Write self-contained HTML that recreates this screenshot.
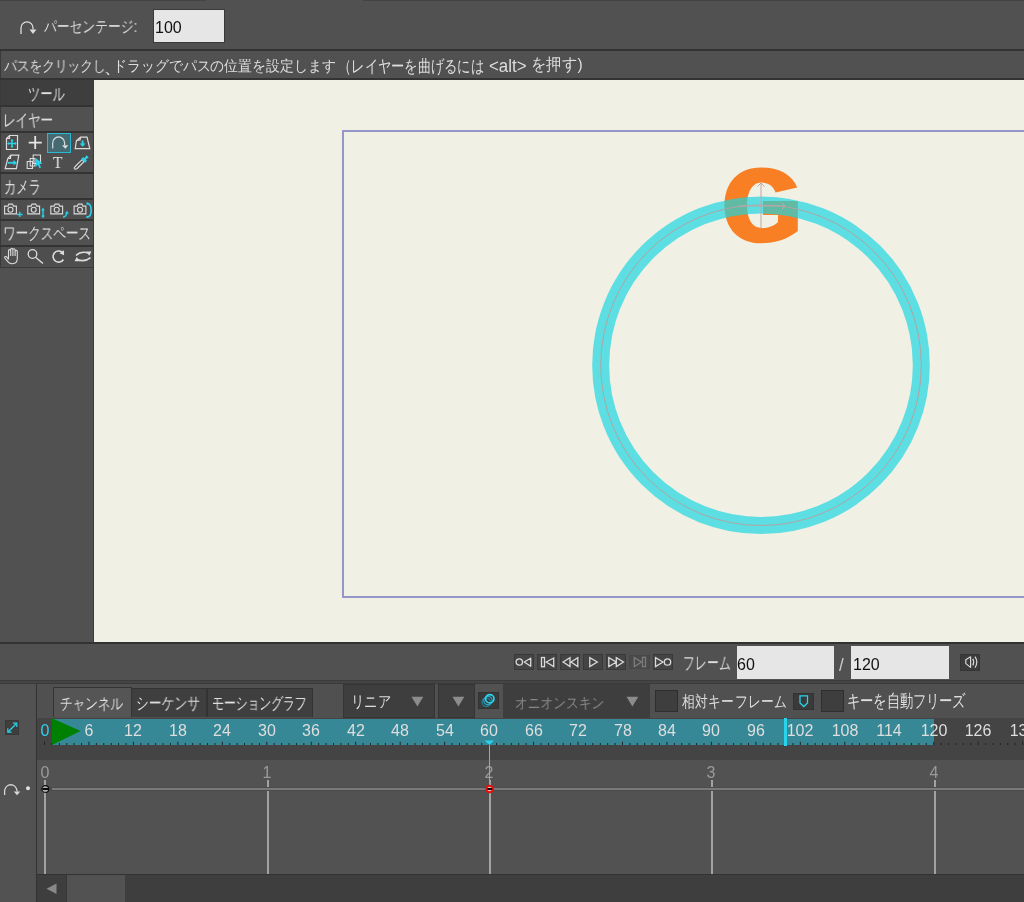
<!DOCTYPE html>
<html><head><meta charset="utf-8">
<style>
*{margin:0;padding:0;box-sizing:border-box}
html,body{width:1024px;height:902px;overflow:hidden;background:#515151;font-family:"Liberation Sans",sans-serif;color:#dedede;font-size:13px}
.a{position:absolute}
.t{position:absolute;white-space:nowrap;line-height:16px;transform-origin:0 0;will-change:transform}
svg{overflow:visible}
</style></head><body>
<div class="a" style="left:0px;top:0px;width:206px;height:1px;background:#444;"></div>
<div class="a" style="left:363px;top:0px;width:661px;height:1px;background:#444;"></div>
<svg class="a" style="left:18px;top:18px;" width="20" height="17" viewBox="0 0 20 17"><path d="M3 16 V10 A6 6.2 0 0 1 15 10 V11.5" fill="none" stroke="#dcdcdc" stroke-width="1.3"/><path d="M11.5 11.5 L18.5 11.5 L15 16 Z" fill="#dcdcdc"/></svg>
<div class="t" style="left:44.4px;top:17.3px;color:#dedede;font-size:13px;transform:matrix(0.985,0,0,1.245,0,0)">パーセンテージ:</div>
<div class="a" style="left:153px;top:9px;width:72px;height:34px;background:#e6e6e6;border:1px solid #3a3a3a"></div>
<div class="t" style="left:155px;top:17px;font-size:16px;color:#111;line-height:20px;transform:scaleY(1.06);transform-origin:0 0">100</div>
<div class="a" style="left:0px;top:49px;width:1024px;height:2px;background:#333;"></div>
<div class="a" style="left:0px;top:51px;width:1px;height:28px;background:#3a3a3a;"></div>
<div class="t" style="left:4.0px;top:57.0px;color:#dedede;font-size:13px;transform:matrix(0.975,0,0,1.125,0,0)">パスをクリックし</div>
<div class="t" style="left:103px;top:56.5px;color:#dedede;font-size:13px;transform:matrix(1.6,0,0,1.3,0,0)">、</div>
<div class="t" style="left:112.6px;top:56.7px;color:#dedede;font-size:13px;transform:matrix(1.071,0,0,1.162,0,0)">ドラッグでパスの位置を設定します</div>
<div class="t" style="left:337.8px;top:55.7px;color:#dedede;font-size:13px;transform:matrix(1.02,0,0,1.308,0,0)">（レイヤーを曲げるには</div>
<div class="t" style="left:488.6px;top:57.9px;color:#dedede;font-size:16px;transform:matrix(1.056,0,0,1.108,0,0)">&lt;alt&gt;</div>
<div class="t" style="left:530.6px;top:54.3px;color:#dedede;font-size:13px;transform:matrix(1.19,0,0,1.331,0,0)">を押す)</div>
<div class="a" style="left:0px;top:78px;width:1024px;height:2px;background:#333;"></div>
<div class="a" style="left:0px;top:80px;width:94px;height:563px;background:#515151;"></div>
<div class="a" style="left:0px;top:80px;width:1px;height:188px;background:#3a3a3a;"></div>
<div class="a" style="left:1px;top:80px;width:92px;height:25px;background:#3e3e3e;"></div>
<div class="t" style="left:28.4px;top:82.5px;color:#dedede;font-size:13px;transform:matrix(0.95,0,0,1.42,0,0)">ツール</div>
<div class="a" style="left:0px;top:105px;width:93px;height:2px;background:#333;"></div>
<div class="t" style="left:3.0px;top:110.5px;color:#dedede;font-size:13px;transform:matrix(0.957,0,0,1.275,0,0)">レイヤー</div>
<div class="a" style="left:0px;top:131px;width:93px;height:2px;background:#333;"></div>
<div class="a" style="left:1px;top:133px;width:92px;height:39px;background:#4e4e4e;"></div>
<div class="a" style="left:0px;top:172px;width:93px;height:2px;background:#333;"></div>
<div class="t" style="left:3.5px;top:175.8px;color:#dedede;font-size:13px;transform:matrix(0.95,0,0,1.4,0,0)">カメラ</div>
<div class="a" style="left:0px;top:198px;width:93px;height:2px;background:#333;"></div>
<div class="a" style="left:1px;top:200px;width:92px;height:19px;background:#4e4e4e;"></div>
<div class="a" style="left:0px;top:219px;width:93px;height:2px;background:#333;"></div>
<div class="t" style="left:3.1px;top:223.7px;color:#dedede;font-size:13px;transform:matrix(0.966,0,0,1.291,0,0)">ワークスペース</div>
<div class="a" style="left:0px;top:245px;width:93px;height:2px;background:#333;"></div>
<div class="a" style="left:1px;top:247px;width:92px;height:20px;background:#4e4e4e;"></div>
<div class="a" style="left:0px;top:267px;width:93px;height:1px;background:#3a3a3a;"></div>
<div class="a" style="left:93px;top:80px;width:1px;height:563px;background:#3a3a3a;"></div>
<svg class="a" style="left:5px;top:134px;" width="16" height="17" viewBox="0 0 16 17"><path d="M4.5 1.5 H12.5 V15.5 H1.5 V4.5 Z M1.5 4.5 H4.5 V1.5" fill="none" stroke="#dcdcdc" stroke-width="1.2"/><path d="M3 9.5 H11 M7 5.8 V13.2" stroke="#29d3ec" stroke-width="1.6"/><path d="M2.2 9.5 L4 7.9 V11.1 Z M11.8 9.5 L10 7.9 V11.1 Z M7 5 L5.4 6.8 H8.6 Z M7 14 L5.4 12.2 H8.6 Z" fill="#29d3ec"/></svg>
<svg class="a" style="left:27px;top:135px;" width="16" height="16" viewBox="0 0 16 16"><path d="M1.7 7.6 H14.8 M8.2 1 V14" stroke="#e6e6e6" stroke-width="1.8"/></svg>
<div class="a" style="left:47px;top:133px;width:24px;height:20px;background:#456a72;border:1.5px solid #2bb8d2"></div>
<svg class="a" style="left:47px;top:133px;" width="24" height="20" viewBox="0 0 24 20"><path d="M5.7 15.5 V10 A5.9 6 0 0 1 17.6 10 V12" fill="none" stroke="#dcdcdc" stroke-width="1.2"/><path d="M15 12.3 L21.3 12.3 L18.3 15.8 Z" fill="#dcdcdc"/></svg>
<svg class="a" style="left:74px;top:136px;" width="17" height="14" viewBox="0 0 17 14"><path d="M1.2 12.6 H15.8 L13 1.2 H6.6 L2.5 4.5 Z M2.5 4.5 L6 4 L6.6 1.2" fill="none" stroke="#dcdcdc" stroke-width="1.2"/><path d="M8.6 4.5 V8" stroke="#29d3ec" stroke-width="2"/><path d="M5.6 7.5 H11.6 L8.6 10.8 Z" fill="#29d3ec"/></svg>
<svg class="a" style="left:4px;top:154px;" width="17" height="16" viewBox="0 0 17 16"><path d="M1.2 14.6 H12.4 L14.8 1.2 H6.8 L3.8 4.5 Z M3.8 4.5 H6.5 L6.8 1.2" fill="none" stroke="#dcdcdc" stroke-width="1.2"/><path d="M4 8.8 H10" stroke="#29d3ec" stroke-width="1.8"/><path d="M9.5 6 L13 8.8 L9.5 11.6 Z" fill="#29d3ec"/></svg>
<svg class="a" style="left:26px;top:154px;" width="17" height="16" viewBox="0 0 17 16"><path d="M1.2 7.5 H6.5 V14.5 H1.2 Z M4.2 4.5 H9 V12 H4.2 Z M7.2 1 H14.5 V9.5 H7.2 Z" fill="#4e4e4e" stroke="#dcdcdc" stroke-width="1.1"/><path d="M10 4.2 L16.5 9.5 L13.5 10 L15 13.5 L13.3 14.3 L11.8 10.8 L10 12.8 Z" fill="#29d3ec"/></svg>
<div class="t" style="left:53.2px;top:154px;font-size:17px;color:#e6e6e6;font-family:'Liberation Serif',serif;line-height:17px;transform:scaleX(0.92);transform-origin:0 0">T</div>
<svg class="a" style="left:73px;top:154px;" width="17" height="16" viewBox="0 0 17 16"><path d="M2.2 12.5 L9 5.7 L11 7.7 L4.2 14.5 Q2.2 15.8 1.3 14.6 Q0.8 13.6 2.2 12.5 Z" fill="none" stroke="#dcdcdc" stroke-width="1.1"/><path d="M8.2 5 L10.2 3 L11.5 4.3 L13.5 1.3 L15.7 3.5 L12.7 5.5 L14 6.8 L12 8.8 Z" fill="#29d3ec"/></svg>
<svg class="a" style="left:3px;top:202px;" width="90" height="17" viewBox="0 0 90 17"><path d="M1.6 4.1 H5 L5.8 2.1 H9.6 L10.4 4.1 H13.4 V11.9 H1.6 Z" fill="none" stroke="#dcdcdc" stroke-width="1.1"/><circle cx="7.5" cy="7.8" r="2.5" fill="none" stroke="#dcdcdc" stroke-width="1.1"/><path d="M14 12.5 H19.5 M16.8 9.8 V15" stroke="#29d3ec" stroke-width="1.3"/><path d="M24.8 4.1 H28.2 L29.0 2.1 H32.8 L33.6 4.1 H36.6 V11.9 H24.8 Z" fill="none" stroke="#dcdcdc" stroke-width="1.1"/><circle cx="30.7" cy="7.8" r="2.5" fill="none" stroke="#dcdcdc" stroke-width="1.1"/><path d="M40 8 V14" stroke="#29d3ec" stroke-width="1.4"/><path d="M38.2 8.5 L40 5.5 L41.8 8.5 Z M38.2 13.5 L40 16.3 L41.8 13.5 Z" fill="#29d3ec"/><path d="M47.800000000000004 4.1 H51.2 L52.0 2.1 H55.800000000000004 L56.6 4.1 H59.6 V11.9 H47.800000000000004 Z" fill="none" stroke="#dcdcdc" stroke-width="1.1"/><circle cx="53.7" cy="7.8" r="2.5" fill="none" stroke="#dcdcdc" stroke-width="1.1"/><path d="M60 15 Q63.5 14.5 63.8 11" fill="none" stroke="#29d3ec" stroke-width="1.4"/><path d="M62 11.5 L64 8.8 L65.8 11.8 Z" fill="#29d3ec"/><path d="M71.1 4.1 H74.5 L75.3 2.1 H79.1 L79.9 4.1 H82.9 V11.9 H71.1 Z" fill="none" stroke="#dcdcdc" stroke-width="1.1"/><circle cx="77.0" cy="7.8" r="2.5" fill="none" stroke="#dcdcdc" stroke-width="1.1"/><path d="M84.2 1.5 Q88.2 1.8 88.2 8.3 Q88.2 14.8 84.2 15" fill="none" stroke="#29d3ec" stroke-width="1.6"/><rect x="83.4" y="0.6" width="2" height="2" fill="#29d3ec"/><rect x="83.4" y="14" width="2" height="2" fill="#29d3ec"/></svg>
<svg class="a" style="left:3px;top:247px;" width="90" height="20" viewBox="0 0 90 20"><path d="M5.5 12.5 V4 Q5.5 2.6 6.6 2.6 Q7.7 2.6 7.7 4 V9 V2.6 Q7.7 1.3 8.8 1.3 Q9.9 1.3 9.9 2.6 V9 V3 Q9.9 1.8 11 1.8 Q12.1 1.8 12.1 3 V9 V4.5 Q12.1 3.4 13.2 3.4 Q14.3 3.4 14.3 4.5 V11.5 Q14.3 16.5 9.5 16.8 Q6.8 17 4.8 14.6 L1.8 11 Q1.4 10 2.4 9.6 Q3.3 9.3 4 10.2 L5.5 12.5" fill="none" stroke="#dcdcdc" stroke-width="1.1"/><circle cx="29.5" cy="7" r="4.3" fill="none" stroke="#dcdcdc" stroke-width="1.3"/><path d="M32.5 10.2 L40 16.5" stroke="#dcdcdc" stroke-width="1.4"/><path d="M59.2 5.2 A5.6 5.6 0 1 0 60.4 12.5" fill="none" stroke="#dcdcdc" stroke-width="1.6"/><path d="M56.4 6.3 L60.9 3.2 L61.1 8.2 Z" fill="#dcdcdc"/><path d="M73 8.5 Q78 3.5 86 6.2 M87.5 10.7 Q82 15.5 74 12.5" fill="none" stroke="#dcdcdc" stroke-width="1.6"/><path d="M83.3 4.5 L88.5 4.6 L86.2 8.8 Z M76.8 14.3 L71.5 14.2 L73.8 10 Z" fill="#dcdcdc"/></svg>
<div class="a" style="left:94px;top:80px;width:930px;height:562px;background:#f0f0e4;overflow:hidden"></div>
<div class="a" style="left:342px;top:130px;width:700px;height:468px;background:transparent;border:2px solid #9696c8;border-right:none"></div>
<svg class="a" style="left:94px;top:80px" width="930" height="562" viewBox="94 80 930 562"><path d="M797.3 187.5 C792 175 780 167.5 761 167.5 C738 167.5 724.5 183 724.5 205.5 C724.5 229 739 243.3 761 243.3 C775 243.3 788 239 797.8 231 V201 H763 V215 H778 V222 C774 226 768 228 762 228 C752 228 747 219 747 205.5 C747 191 753 182.5 761 182.5 C768 182.5 773.5 186 775.5 192.5 Z" fill="#f97f24"/><circle cx="761" cy="365.2" r="160.3" fill="none" stroke="rgba(24,214,226,0.68)" stroke-width="17"/><circle cx="761" cy="365.2" r="160.3" fill="none" stroke="#b0a4a4" stroke-width="1"/><path d="M761 183 V228.5 M738.5 206 H785" stroke="#c0a8a8" stroke-width="1"/><path d="M757.5 186.5 L761 183 L764.5 186.5 M781.5 202.5 L785 206 L781.5 209.5" fill="none" stroke="#c0a8a8" stroke-width="1"/></svg>
<div class="a" style="left:0px;top:642px;width:1024px;height:2px;background:#333;"></div>
<div class="a" style="left:0px;top:644px;width:1024px;height:36px;background:#515151;"></div>
<div class="a" style="left:514px;top:654px;width:20px;height:16px;background:#444;border:1px solid #393939"></div>
<svg class="a" style="left:514px;top:654px;" width="20" height="16" viewBox="0 0 20 16"><circle cx="5.3" cy="8" r="3.2" fill="none" stroke="#dadada" stroke-width="1.3"/><path d="M10.2 8 L16.7 4.2 V12.3 Z" fill="none" stroke="#dadada" stroke-width="1.3" stroke-linejoin="round"/></svg>
<div class="a" style="left:537px;top:654px;width:20px;height:16px;background:#444;border:1px solid #393939"></div>
<svg class="a" style="left:537px;top:654px;" width="20" height="16" viewBox="0 0 20 16"><rect x="4.5" y="3.5" width="3" height="9.2" fill="none" stroke="#dadada" stroke-width="1.3"/><path d="M9.2 8 L16.7 4 V12.6 Z" fill="none" stroke="#dadada" stroke-width="1.3"/></svg>
<div class="a" style="left:560px;top:654px;width:20px;height:16px;background:#444;border:1px solid #393939"></div>
<svg class="a" style="left:560px;top:654px;" width="20" height="16" viewBox="0 0 20 16"><path d="M3.1 8 L10 3.6 V12.6 Z M11 8 L17.8 3.6 V12.6 Z" fill="none" stroke="#dadada" stroke-width="1.3"/></svg>
<div class="a" style="left:583px;top:654px;width:20px;height:16px;background:#444;border:1px solid #393939"></div>
<svg class="a" style="left:583px;top:654px;" width="20" height="16" viewBox="0 0 20 16"><path d="M6.8 3.6 V12.6 L14.3 8 Z" fill="none" stroke="#dadada" stroke-width="1.3"/></svg>
<div class="a" style="left:606px;top:654px;width:20px;height:16px;background:#444;border:1px solid #393939"></div>
<svg class="a" style="left:606px;top:654px;" width="20" height="16" viewBox="0 0 20 16"><path d="M2.8 3.6 V12.6 L10.3 8 Z M10.3 3.6 V12.6 L17.5 8 Z" fill="none" stroke="#dadada" stroke-width="1.3"/></svg>
<div class="a" style="left:629px;top:655px;width:21px;height:14px;background:#4a4a4a;border:1px solid #474747"></div>
<svg class="a" style="left:629px;top:654px;" width="20" height="16" viewBox="0 0 20 16"><path d="M5.3 3.6 V12.6 L12.6 8 Z" fill="none" stroke="#7c7c7c" stroke-width="1.3"/><rect x="13.5" y="3.3" width="3" height="9.4" fill="none" stroke="#7c7c7c" stroke-width="1.3"/></svg>
<div class="a" style="left:653px;top:654px;width:20px;height:16px;background:#444;border:1px solid #393939"></div>
<svg class="a" style="left:653px;top:654px;" width="20" height="16" viewBox="0 0 20 16"><path d="M2.5 3.6 V12.6 L10 8 Z" fill="none" stroke="#dadada" stroke-width="1.3"/><circle cx="14.5" cy="8" r="3.2" fill="none" stroke="#dadada" stroke-width="1.3"/></svg>
<div class="t" style="left:682.6px;top:652.2px;color:#dedede;font-size:13px;transform:matrix(0.924,0,0,1.41,0,0)">フレーム</div>
<div class="a" style="left:737px;top:646px;width:97px;height:33px;background:#e6e6e6;"></div>
<div class="t" style="left:737px;top:654px;font-size:16px;color:#111;line-height:20px;transform:scaleY(1.06);transform-origin:0 0">60</div>
<div class="t" style="left:838.5px;top:655px;font-size:17px;color:#cfcfcf;line-height:19px;transform:scaleY(1.05)">/</div>
<div class="a" style="left:851px;top:646px;width:98px;height:33px;background:#e6e6e6;"></div>
<div class="t" style="left:853px;top:654px;font-size:16px;color:#111;line-height:20px;transform:scaleY(1.06);transform-origin:0 0">120</div>
<div class="a" style="left:960px;top:654px;width:20px;height:17px;background:#3c3c3c;border:1px solid #353535"></div>
<svg class="a" style="left:960px;top:654px;" width="21" height="17" viewBox="0 0 21 17"><path d="M5.8 5.8 L10.6 2.8 V13.4 L5.8 9.6 Z" fill="none" stroke="#d8d8d8" stroke-width="1.2" stroke-linejoin="round"/><path d="M12.8 4.8 Q14.6 8.1 12.8 11.4 M15 2.6 Q18.6 8.1 15 13.6" fill="none" stroke="#d8d8d8" stroke-width="1.2"/></svg>
<div class="a" style="left:0px;top:680px;width:1024px;height:4px;background:#3b3b3b;"></div>
<div class="a" style="left:0px;top:681px;width:1024px;height:2px;background:#444;"></div>
<div class="a" style="left:0px;top:684px;width:1024px;height:218px;background:#505050;"></div>
<div class="a" style="left:0px;top:684px;width:36px;height:218px;background:#525252;"></div>
<div class="a" style="left:36px;top:684px;width:1px;height:218px;background:#333;"></div>
<div class="a" style="left:5px;top:720px;width:14px;height:15px;background:#3e3e3e;border:1px solid #383838"></div>
<svg class="a" style="left:5px;top:720px;" width="14" height="15" viewBox="0 0 14 15"><path d="M3 12 L11 4" stroke="#29d3ec" stroke-width="1.2"/><path d="M8 3.2 H11.8 V7" fill="none" stroke="#29d3ec" stroke-width="1.2"/><path d="M2.8 8.3 V12.2 H6.6" fill="none" stroke="#29d3ec" stroke-width="1.2"/></svg>
<svg class="a" style="left:3px;top:781px;" width="30" height="16" viewBox="0 0 30 16"><path d="M1.6 14 V9.5 A6.3 7 0 0 1 14 9.5 V10.5" fill="none" stroke="#d8d8d8" stroke-width="1.3"/><path d="M10.8 10.5 L17.3 10.5 L14 14.3 Z" fill="#d8d8d8"/><circle cx="25" cy="7.3" r="2" fill="#e0e0e0"/></svg>
<div class="a" style="left:53px;top:687px;width:79px;height:30px;background:#555;border:1px solid #333;border-bottom:none"></div>
<div class="a" style="left:131px;top:688px;width:76px;height:29px;background:#3f3f3f;border:1px solid #333;border-bottom:none"></div>
<div class="a" style="left:207px;top:688px;width:106px;height:29px;background:#3f3f3f;border:1px solid #333;border-bottom:none"></div>
<div class="t" style="left:60.0px;top:694.2px;color:#dedede;font-size:13px;transform:matrix(0.969,0,0,1.225,0,0)">チャンネル</div>
<div class="t" style="left:135.7px;top:692.6px;color:#dedede;font-size:13px;transform:matrix(0.989,0,0,1.336,0,0)">シーケンサ</div>
<div class="t" style="left:212.1px;top:693.5px;color:#dedede;font-size:13px;transform:matrix(0.908,0,0,1.275,0,0)">モーショングラフ</div>
<div class="a" style="left:343px;top:684px;width:92px;height:34px;background:#3e3e3e;border:1px solid #353535"></div>
<div class="t" style="left:350.9px;top:691.9px;color:#dedede;font-size:13px;transform:matrix(1.029,0,0,1.245,0,0)">リニア</div>
<svg class="a" style="left:411px;top:696px;" width="13" height="11" viewBox="0 0 13 11"><path d="M0.5 0.8 H12.3 L6.4 10.5 Z" fill="#8c8c8c"/></svg>
<div class="a" style="left:438px;top:684px;width:37px;height:34px;background:#3e3e3e;border:1px solid #353535"></div>
<svg class="a" style="left:452px;top:696px;" width="13" height="11" viewBox="0 0 13 11"><path d="M0.5 0.8 H12.3 L6.4 10.5 Z" fill="#8c8c8c"/></svg>
<div class="a" style="left:475px;top:684px;width:28px;height:34px;background:#525252;"></div>
<div class="a" style="left:478px;top:692px;width:21px;height:17px;background:#3a3a3a;border:1px solid #333"></div>
<svg class="a" style="left:478px;top:692px;" width="21" height="17" viewBox="0 0 21 17"><circle cx="8.3" cy="10.3" r="4.2" fill="none" stroke="#1f7f95" stroke-width="1.3"/><circle cx="10" cy="8.6" r="4.2" fill="none" stroke="#2aa6c0" stroke-width="1.3"/><circle cx="11.8" cy="6.8" r="4.2" fill="none" stroke="#2fd4ee" stroke-width="1.6"/></svg>
<div class="a" style="left:503px;top:684px;width:147px;height:34px;background:#3e3e3e;"></div>
<div class="t" style="left:515.0px;top:693.7px;color:#888;font-size:13px;transform:matrix(0.982,0,0,1.167,0,0)">オニオンスキン</div>
<svg class="a" style="left:626px;top:696px;" width="13" height="11" viewBox="0 0 13 11"><path d="M0.5 0.8 H12.3 L6.4 10.5 Z" fill="#8c8c8c"/></svg>
<div class="a" style="left:655px;top:690px;width:23px;height:22px;background:#3e3e3e;border:1px solid #2e2e2e"></div>
<div class="t" style="left:681.5px;top:692.1px;color:#dedede;font-size:13px;transform:matrix(1.011,0,0,1.262,0,0)">相対キーフレーム</div>
<div class="a" style="left:793px;top:693px;width:21px;height:17px;background:#3a3a3a;border:1px solid #333"></div>
<svg class="a" style="left:793px;top:693px;" width="21" height="17" viewBox="0 0 21 17"><path d="M7 2.8 H14.5 V10 L10.8 13.5 L7 10 Z" fill="none" stroke="#29d3ec" stroke-width="1.3"/></svg>
<div class="a" style="left:821px;top:690px;width:23px;height:22px;background:#3e3e3e;border:1px solid #2e2e2e"></div>
<div class="t" style="left:846.5px;top:690.7px;color:#dedede;font-size:13px;transform:matrix(1.013,0,0,1.367,0,0)">キーを自動フリーズ</div>
<div class="a" style="left:37px;top:718px;width:987px;height:42px;background:#444;"></div>
<div class="a" style="left:52px;top:719px;width:882px;height:26px;background:#368896;"></div>
<svg class="a" style="left:0;top:0" width="1024" height="902" viewBox="0 0 1024 902"><rect x="44.00" y="741.80" width="1" height="3.2" fill="#222"/><rect x="51.41" y="743.00" width="1" height="2" fill="#222"/><rect x="58.82" y="743.00" width="1" height="2" fill="#222"/><rect x="66.23" y="743.00" width="1" height="2" fill="#222"/><rect x="73.64" y="743.00" width="1" height="2" fill="#222"/><rect x="81.05" y="743.00" width="1" height="2" fill="#222"/><rect x="88.46" y="741.80" width="1" height="3.2" fill="#222"/><rect x="95.87" y="743.00" width="1" height="2" fill="#222"/><rect x="103.28" y="743.00" width="1" height="2" fill="#222"/><rect x="110.69" y="743.00" width="1" height="2" fill="#222"/><rect x="118.10" y="743.00" width="1" height="2" fill="#222"/><rect x="125.51" y="743.00" width="1" height="2" fill="#222"/><rect x="132.92" y="741.80" width="1" height="3.2" fill="#222"/><rect x="140.33" y="743.00" width="1" height="2" fill="#222"/><rect x="147.74" y="743.00" width="1" height="2" fill="#222"/><rect x="155.15" y="743.00" width="1" height="2" fill="#222"/><rect x="162.56" y="743.00" width="1" height="2" fill="#222"/><rect x="169.97" y="743.00" width="1" height="2" fill="#222"/><rect x="177.38" y="741.80" width="1" height="3.2" fill="#222"/><rect x="184.79" y="743.00" width="1" height="2" fill="#222"/><rect x="192.20" y="743.00" width="1" height="2" fill="#222"/><rect x="199.61" y="743.00" width="1" height="2" fill="#222"/><rect x="207.02" y="743.00" width="1" height="2" fill="#222"/><rect x="214.43" y="743.00" width="1" height="2" fill="#222"/><rect x="221.84" y="741.80" width="1" height="3.2" fill="#222"/><rect x="229.25" y="743.00" width="1" height="2" fill="#222"/><rect x="236.66" y="743.00" width="1" height="2" fill="#222"/><rect x="244.07" y="743.00" width="1" height="2" fill="#222"/><rect x="251.48" y="743.00" width="1" height="2" fill="#222"/><rect x="258.89" y="743.00" width="1" height="2" fill="#222"/><rect x="266.30" y="741.80" width="1" height="3.2" fill="#222"/><rect x="273.71" y="743.00" width="1" height="2" fill="#222"/><rect x="281.12" y="743.00" width="1" height="2" fill="#222"/><rect x="288.53" y="743.00" width="1" height="2" fill="#222"/><rect x="295.94" y="743.00" width="1" height="2" fill="#222"/><rect x="303.35" y="743.00" width="1" height="2" fill="#222"/><rect x="310.76" y="741.80" width="1" height="3.2" fill="#222"/><rect x="318.17" y="743.00" width="1" height="2" fill="#222"/><rect x="325.58" y="743.00" width="1" height="2" fill="#222"/><rect x="332.99" y="743.00" width="1" height="2" fill="#222"/><rect x="340.40" y="743.00" width="1" height="2" fill="#222"/><rect x="347.81" y="743.00" width="1" height="2" fill="#222"/><rect x="355.22" y="741.80" width="1" height="3.2" fill="#222"/><rect x="362.63" y="743.00" width="1" height="2" fill="#222"/><rect x="370.04" y="743.00" width="1" height="2" fill="#222"/><rect x="377.45" y="743.00" width="1" height="2" fill="#222"/><rect x="384.86" y="743.00" width="1" height="2" fill="#222"/><rect x="392.27" y="743.00" width="1" height="2" fill="#222"/><rect x="399.68" y="741.80" width="1" height="3.2" fill="#222"/><rect x="407.09" y="743.00" width="1" height="2" fill="#222"/><rect x="414.50" y="743.00" width="1" height="2" fill="#222"/><rect x="421.91" y="743.00" width="1" height="2" fill="#222"/><rect x="429.32" y="743.00" width="1" height="2" fill="#222"/><rect x="436.73" y="743.00" width="1" height="2" fill="#222"/><rect x="444.14" y="741.80" width="1" height="3.2" fill="#222"/><rect x="451.55" y="743.00" width="1" height="2" fill="#222"/><rect x="458.96" y="743.00" width="1" height="2" fill="#222"/><rect x="466.37" y="743.00" width="1" height="2" fill="#222"/><rect x="473.78" y="743.00" width="1" height="2" fill="#222"/><rect x="481.19" y="743.00" width="1" height="2" fill="#222"/><rect x="488.60" y="741.80" width="1" height="3.2" fill="#222"/><rect x="496.01" y="743.00" width="1" height="2" fill="#222"/><rect x="503.42" y="743.00" width="1" height="2" fill="#222"/><rect x="510.83" y="743.00" width="1" height="2" fill="#222"/><rect x="518.24" y="743.00" width="1" height="2" fill="#222"/><rect x="525.65" y="743.00" width="1" height="2" fill="#222"/><rect x="533.06" y="741.80" width="1" height="3.2" fill="#222"/><rect x="540.47" y="743.00" width="1" height="2" fill="#222"/><rect x="547.88" y="743.00" width="1" height="2" fill="#222"/><rect x="555.29" y="743.00" width="1" height="2" fill="#222"/><rect x="562.70" y="743.00" width="1" height="2" fill="#222"/><rect x="570.11" y="743.00" width="1" height="2" fill="#222"/><rect x="577.52" y="741.80" width="1" height="3.2" fill="#222"/><rect x="584.93" y="743.00" width="1" height="2" fill="#222"/><rect x="592.34" y="743.00" width="1" height="2" fill="#222"/><rect x="599.75" y="743.00" width="1" height="2" fill="#222"/><rect x="607.16" y="743.00" width="1" height="2" fill="#222"/><rect x="614.57" y="743.00" width="1" height="2" fill="#222"/><rect x="621.98" y="741.80" width="1" height="3.2" fill="#222"/><rect x="629.39" y="743.00" width="1" height="2" fill="#222"/><rect x="636.80" y="743.00" width="1" height="2" fill="#222"/><rect x="644.21" y="743.00" width="1" height="2" fill="#222"/><rect x="651.62" y="743.00" width="1" height="2" fill="#222"/><rect x="659.03" y="743.00" width="1" height="2" fill="#222"/><rect x="666.44" y="741.80" width="1" height="3.2" fill="#222"/><rect x="673.85" y="743.00" width="1" height="2" fill="#222"/><rect x="681.26" y="743.00" width="1" height="2" fill="#222"/><rect x="688.67" y="743.00" width="1" height="2" fill="#222"/><rect x="696.08" y="743.00" width="1" height="2" fill="#222"/><rect x="703.49" y="743.00" width="1" height="2" fill="#222"/><rect x="710.90" y="741.80" width="1" height="3.2" fill="#222"/><rect x="718.31" y="743.00" width="1" height="2" fill="#222"/><rect x="725.72" y="743.00" width="1" height="2" fill="#222"/><rect x="733.13" y="743.00" width="1" height="2" fill="#222"/><rect x="740.54" y="743.00" width="1" height="2" fill="#222"/><rect x="747.95" y="743.00" width="1" height="2" fill="#222"/><rect x="755.36" y="741.80" width="1" height="3.2" fill="#222"/><rect x="762.77" y="743.00" width="1" height="2" fill="#222"/><rect x="770.18" y="743.00" width="1" height="2" fill="#222"/><rect x="777.59" y="743.00" width="1" height="2" fill="#222"/><rect x="785.00" y="743.00" width="1" height="2" fill="#222"/><rect x="792.41" y="743.00" width="1" height="2" fill="#222"/><rect x="799.82" y="741.80" width="1" height="3.2" fill="#222"/><rect x="807.23" y="743.00" width="1" height="2" fill="#222"/><rect x="814.64" y="743.00" width="1" height="2" fill="#222"/><rect x="822.05" y="743.00" width="1" height="2" fill="#222"/><rect x="829.46" y="743.00" width="1" height="2" fill="#222"/><rect x="836.87" y="743.00" width="1" height="2" fill="#222"/><rect x="844.28" y="741.80" width="1" height="3.2" fill="#222"/><rect x="851.69" y="743.00" width="1" height="2" fill="#222"/><rect x="859.10" y="743.00" width="1" height="2" fill="#222"/><rect x="866.51" y="743.00" width="1" height="2" fill="#222"/><rect x="873.92" y="743.00" width="1" height="2" fill="#222"/><rect x="881.33" y="743.00" width="1" height="2" fill="#222"/><rect x="888.74" y="741.80" width="1" height="3.2" fill="#222"/><rect x="896.15" y="743.00" width="1" height="2" fill="#222"/><rect x="903.56" y="743.00" width="1" height="2" fill="#222"/><rect x="910.97" y="743.00" width="1" height="2" fill="#222"/><rect x="918.38" y="743.00" width="1" height="2" fill="#222"/><rect x="925.79" y="743.00" width="1" height="2" fill="#222"/><rect x="933.20" y="741.80" width="1" height="3.2" fill="#222"/><rect x="940.61" y="743.00" width="1" height="2" fill="#222"/><rect x="948.02" y="743.00" width="1" height="2" fill="#222"/><rect x="955.43" y="743.00" width="1" height="2" fill="#222"/><rect x="962.84" y="743.00" width="1" height="2" fill="#222"/><rect x="970.25" y="743.00" width="1" height="2" fill="#222"/><rect x="977.66" y="741.80" width="1" height="3.2" fill="#222"/><rect x="985.07" y="743.00" width="1" height="2" fill="#222"/><rect x="992.48" y="743.00" width="1" height="2" fill="#222"/><rect x="999.89" y="743.00" width="1" height="2" fill="#222"/><rect x="1007.30" y="743.00" width="1" height="2" fill="#222"/><rect x="1014.71" y="743.00" width="1" height="2" fill="#222"/><rect x="1022.12" y="741.80" width="1" height="3.2" fill="#222"/><rect x="1029.53" y="743.00" width="1" height="2" fill="#222"/></svg>
<div class="t" style="left:4.5px;top:722px;width:80px;text-align:center;font-size:16px;line-height:18px;color:#2fd0f0">0</div>
<div class="t" style="left:49.0px;top:722px;width:80px;text-align:center;font-size:16px;line-height:18px;color:#dedede">6</div>
<div class="t" style="left:93.4px;top:722px;width:80px;text-align:center;font-size:16px;line-height:18px;color:#dedede">12</div>
<div class="t" style="left:137.9px;top:722px;width:80px;text-align:center;font-size:16px;line-height:18px;color:#dedede">18</div>
<div class="t" style="left:182.3px;top:722px;width:80px;text-align:center;font-size:16px;line-height:18px;color:#dedede">24</div>
<div class="t" style="left:226.8px;top:722px;width:80px;text-align:center;font-size:16px;line-height:18px;color:#dedede">30</div>
<div class="t" style="left:271.3px;top:722px;width:80px;text-align:center;font-size:16px;line-height:18px;color:#dedede">36</div>
<div class="t" style="left:315.7px;top:722px;width:80px;text-align:center;font-size:16px;line-height:18px;color:#dedede">42</div>
<div class="t" style="left:360.2px;top:722px;width:80px;text-align:center;font-size:16px;line-height:18px;color:#dedede">48</div>
<div class="t" style="left:404.6px;top:722px;width:80px;text-align:center;font-size:16px;line-height:18px;color:#dedede">54</div>
<div class="t" style="left:449.1px;top:722px;width:80px;text-align:center;font-size:16px;line-height:18px;color:#dedede">60</div>
<div class="t" style="left:493.6px;top:722px;width:80px;text-align:center;font-size:16px;line-height:18px;color:#dedede">66</div>
<div class="t" style="left:538.0px;top:722px;width:80px;text-align:center;font-size:16px;line-height:18px;color:#dedede">72</div>
<div class="t" style="left:582.5px;top:722px;width:80px;text-align:center;font-size:16px;line-height:18px;color:#dedede">78</div>
<div class="t" style="left:626.9px;top:722px;width:80px;text-align:center;font-size:16px;line-height:18px;color:#dedede">84</div>
<div class="t" style="left:671.4px;top:722px;width:80px;text-align:center;font-size:16px;line-height:18px;color:#dedede">90</div>
<div class="t" style="left:715.9px;top:722px;width:80px;text-align:center;font-size:16px;line-height:18px;color:#dedede">96</div>
<div class="t" style="left:760.3px;top:722px;width:80px;text-align:center;font-size:16px;line-height:18px;color:#dedede">102</div>
<div class="t" style="left:804.8px;top:722px;width:80px;text-align:center;font-size:16px;line-height:18px;color:#dedede">108</div>
<div class="t" style="left:849.2px;top:722px;width:80px;text-align:center;font-size:16px;line-height:18px;color:#dedede">114</div>
<div class="t" style="left:893.7px;top:722px;width:80px;text-align:center;font-size:16px;line-height:18px;color:#dedede">120</div>
<div class="t" style="left:938.2px;top:722px;width:80px;text-align:center;font-size:16px;line-height:18px;color:#dedede">126</div>
<div class="t" style="left:982.6px;top:722px;width:80px;text-align:center;font-size:16px;line-height:18px;color:#dedede">132</div>
<svg class="a" style="left:52px;top:718px;" width="30" height="28" viewBox="0 0 30 28"><path d="M0 0.3 L28.6 13 L0 27 Z" fill="#008000"/></svg>
<div class="a" style="left:784px;top:718px;width:3px;height:28px;background:#29d3ec;"></div>
<div class="a" style="left:37px;top:760px;width:987px;height:114px;background:#525252;"></div>
<div class="t" style="left:24.5px;top:764px;width:40px;text-align:center;font-size:16px;line-height:18px;color:#9a9a9a">0</div>
<div class="a" style="left:44px;top:780px;width:2px;height:94px;background:#a2a2a2;"></div>
<div class="t" style="left:246.8px;top:764px;width:40px;text-align:center;font-size:16px;line-height:18px;color:#9a9a9a">1</div>
<div class="a" style="left:267px;top:780px;width:2px;height:94px;background:#a2a2a2;"></div>
<div class="t" style="left:469.1px;top:764px;width:40px;text-align:center;font-size:16px;line-height:18px;color:#9a9a9a">2</div>
<div class="a" style="left:489px;top:780px;width:2px;height:94px;background:#a2a2a2;"></div>
<div class="t" style="left:691.4px;top:764px;width:40px;text-align:center;font-size:16px;line-height:18px;color:#9a9a9a">3</div>
<div class="a" style="left:711px;top:780px;width:2px;height:94px;background:#a2a2a2;"></div>
<div class="t" style="left:913.7px;top:764px;width:40px;text-align:center;font-size:16px;line-height:18px;color:#9a9a9a">4</div>
<div class="a" style="left:934px;top:780px;width:2px;height:94px;background:#a2a2a2;"></div>
<div class="a" style="left:40px;top:787px;width:984px;height:4px;background:#4c4c4c;"></div>
<div class="a" style="left:52px;top:788px;width:972px;height:2px;background:#7a7a7a;"></div>
<svg class="a" style="left:40px;top:784px;" width="10" height="10" viewBox="0 0 10 10"><circle cx="5.3" cy="5" r="3.4" fill="#b4b4b4" stroke="#0c0c0c" stroke-width="1.1"/><rect x="2.4" y="4" width="5.8" height="2" fill="#080808"/></svg>
<div class="a" style="left:489px;top:745px;width:1px;height:129px;background:#2fd4ec;"></div>
<svg class="a" style="left:484px;top:740px;" width="11" height="6" viewBox="0 0 11 6"><path d="M0.5 0.5 H10 L5.3 5 Z" fill="#29d3ec"/></svg>
<svg class="a" style="left:485px;top:784px;" width="10" height="10" viewBox="0 0 10 10"><circle cx="4.6" cy="5" r="3.3" fill="#c8c8c8" stroke="#e80c0c" stroke-width="2"/><rect x="2.3" y="4" width="4.8" height="2" fill="#080808"/></svg>
<div class="a" style="left:37px;top:874px;width:987px;height:1px;background:#333;"></div>
<div class="a" style="left:37px;top:875px;width:987px;height:27px;background:#3e3e3e;"></div>
<div class="a" style="left:67px;top:875px;width:58px;height:27px;background:#525252;"></div>
<div class="a" style="left:66px;top:875px;width:1px;height:27px;background:#363636;"></div>
<svg class="a" style="left:46px;top:883px;" width="12" height="12" viewBox="0 0 12 12"><path d="M0.5 5.8 L10.5 0.5 V11 Z" fill="#888"/></svg>
</body></html>
